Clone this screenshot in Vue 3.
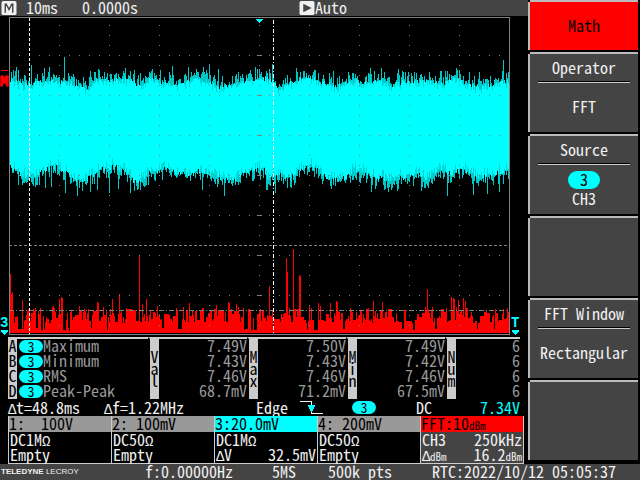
<script setup>
import { h } from 'vue'

// Splits a reading into plain characters, Greek symbols and the small dBm unit.
const Reading = (props) =>
  h('span', { class: 'reading' }, props.text.split(/([ΔΩ]|dBm)/).filter(Boolean).map((part) => {
    if (part === 'dBm') return h('span', { class: 'unit' }, part)
    if (part === 'Δ' || part === 'Ω') return h('span', { class: 'sym' }, part)
    return part
  }))
Reading.props = ['text']

// Deterministic noise so that the trace is the same on each load.
let seed = 20221012
const rand = () => {
  seed = (seed * 1664525 + 1013904223) % 4294967296
  return seed / 4294967296
}

const LEFT = 10
const RIGHT = 509
const interpolate = (points, x) => {
  let i = 0
  while (i < points.length - 2 && points[i + 1][0] < x) i++
  const [x0, y0] = points[i]
  const [x1, y1] = points[i + 1]
  return y0 + ((y1 - y0) * (x - x0)) / (x1 - x0)
}

const upper = [[10, 80], [20, 84], [30, 86], [40, 82], [50, 81], [60, 83], [70, 84], [80, 87], [88, 90], [95, 80], [105, 80], [120, 81], [130, 79], [138, 86], [150, 80], [165, 84], [180, 86], [190, 81], [200, 80], [210, 83], [220, 88], [235, 85], [245, 81], [255, 79], [270, 80], [280, 90], [290, 84], [300, 79], [315, 80], [325, 84], [335, 88], [345, 85], [355, 82], [370, 84], [380, 80], [390, 87], [400, 83], [420, 82], [440, 84], [455, 80], [475, 87], [482, 88], [490, 86], [500, 83], [509, 82]]
const lower = [[10, 167], [20, 174], [30, 177], [45, 170], [57, 165], [65, 172], [78, 181], [90, 177], [100, 169], [113, 167], [125, 172], [135, 182], [143, 179], [150, 171], [165, 169], [180, 173], [190, 175], [200, 171], [210, 174], [220, 178], [235, 178], [245, 171], [255, 170], [263, 167], [267, 178], [280, 173], [290, 178], [300, 171], [305, 165], [315, 168], [325, 176], [337, 180], [347, 177], [355, 171], [365, 173], [375, 178], [390, 179], [405, 177], [415, 173], [425, 177], [440, 170], [450, 174], [460, 169], [470, 172], [480, 178], [490, 175], [500, 172], [509, 169]]
const upperPeaks = { 16: 67, 18: 70, 31: 65, 44: 68, 49: 67, 64: 57, 73: 74, 90: 71, 98: 69, 116: 73, 130: 71, 140: 73, 160: 70, 172: 66, 188: 67, 203: 67, 209: 64, 218: 69, 255: 67, 272: 64, 296: 68, 303: 71, 315: 70, 333: 71, 353: 73, 370: 68, 384: 72, 398: 69, 405: 72, 429: 72, 440: 71, 445: 71, 447: 71, 456: 68, 459: 70, 469: 72, 479: 72, 503: 60, 506: 73 }
const lowerPeaks = { 18: 185, 33: 186, 45: 188, 51: 187, 65: 193, 77: 196, 90: 192, 97: 190, 109: 193, 118: 189, 130: 193, 134: 191, 202: 190, 224: 196, 266: 190, 275: 193, 331: 189, 371: 192, 391: 190, 398: 189, 421: 191, 447: 196, 473: 195, 487: 194, 499: 192 }

let body = ''
let fringe = ''
let shade = ''
for (let x = LEFT; x < RIGHT; x++) {
  const top = Math.round(interpolate(upper, x) + rand() * 5 - 3) - 16
  const bottom = Math.round(interpolate(lower, x) + rand() * 6 - 3) - 16
  body += `M${x} ${top}h1V${bottom}h-1z`
  const up = upperPeaks[x] ? upperPeaks[x] - 16 : Math.round(top - rand() ** 1.6 * 11)
  const down = lowerPeaks[x] ? lowerPeaks[x] - 16 : Math.round(bottom + rand() ** 1.8 * 11)
  fringe += `M${x} ${Math.min(up, top)}h1V${Math.max(down, bottom)}h-1z`
  if (rand() > 0.7) shade += `M${x} ${top}h1v4h-1zM${x} ${bottom - 6}h1v6h-1z`
}

const spectrumPeaks = { 10: 274, 11: 294, 12: 292, 13: 311, 22: 300, 29: 309, 52: 307, 53: 306, 54: 308, 59: 299, 61: 297, 62: 298, 79: 306, 97: 302, 98: 303, 103: 307, 112: 299, 119: 294, 139: 255, 142: 304, 146: 299, 157: 306, 183: 307, 189: 303, 216: 305, 228: 302, 229: 303, 236: 304, 238: 307, 260: 309, 269: 286, 286: 258, 287: 272, 293: 249, 299: 275, 300: 276, 309: 305, 311: 308, 318: 303, 320: 306, 330: 303, 336: 301, 337: 302, 350: 308, 373: 301, 382: 302, 425: 307, 427: 289, 432: 307, 451: 297, 453: 298, 454: 299, 456: 307, 458: 300, 463: 298, 465: 301, 495: 309, 507: 308 }
let spectrum = ''
let level = 12
for (let x = LEFT; x < RIGHT; x++) {
  const r = rand()
  if (r > 0.35) level = r > 0.95 ? 2 + rand() * 3 : 10 + rand() * 15
  const y = (spectrumPeaks[x] ?? 333 - Math.round(level)) - 16
  spectrum += `M${x} ${y}h1V317h-1z`
}

let dots = ''
for (let y = 25; y < 334; y += 10) {
  for (let x = 59; x < 509; x += 50) dots += `M${x} ${y - 16}h1v1h-1z`
}
for (let y = 55; y < 334; y += 40) {
  for (let x = 19; x < 509; x += 10) dots += `M${x} ${y - 16}h1v1h-1z`
  dots += `M257 ${y - 16}h5v1h-5z`
}

const measures = [
  { id: 'A', name: 'Maximum', values: ['7.49V', '7.50V', '7.49V', '6'] },
  { id: 'B', name: 'Minimum', values: ['7.43V', '7.43V', '7.42V', '6'] },
  { id: 'C', name: 'RMS', values: ['7.46V', '7.46V', '7.46V', '6'] },
  { id: 'D', name: 'Peak-Peak', values: ['68.7mV', '71.2mV', '67.5mV', '6'] }
]
const statistics = ['Val', 'Max', 'Min', 'Num']

const channels = [
  { head: '1:  100V', coupling: ['DC1MΩ'], state: ['Empty'] },
  { head: '2: 100mV', coupling: ['DC50Ω'], state: ['Empty'] },
  { head: '3:20.0mV', coupling: ['DC1MΩ'], state: ['ΔV', '32.5mV'], kind: 'active' },
  { head: '4: 200mV', coupling: ['DC50Ω'], state: ['Empty'] },
  { head: 'FFT:10dBm', coupling: ['CH3', '250kHz'], state: ['ΔdBm', '16.2dBm'], kind: 'math' }
]

const menu = [
  { label: 'Operator', value: 'FFT' },
  { label: 'Source', value: 'CH3', badge: '3' },
  {},
  { label: 'FFT Window', value: 'Rectangular' },
  {}
]
</script>

<template>
  <div class="screen">
    <main class="main">
      <header class="topbar">
        <svg class="box" viewBox="0 0 16 16" aria-hidden="true">
          <rect width="16" height="15" rx="2" fill="#f0f0f0" />
          <path d="M4 12.500V3.500h1l3 5.500 3-5.500h1v9" fill="none" stroke="#444" stroke-width="1.500" />
        </svg>
        <span class="timebase">10ms</span>
        <span class="delay">0.0000s</span>
        <span class="mode">
          <svg class="box" viewBox="0 0 16 16" aria-hidden="true">
            <rect width="16" height="15" rx="2" fill="#f0f0f0" />
            <path d="M4 3l9 4.500L4 12z" fill="#444" />
          </svg>
          Auto
        </span>
      </header>

      <svg class="plot" viewBox="0 0 528 320" shape-rendering="crispEdges" role="img" aria-label="Waveform">
        <path :d="fringe" fill="#00c8c8" />
        <path :d="body" fill="#00ffff" />
        <path :d="shade" fill="#00d8d8" />
        <path :d="spectrum" fill="#ff0000" />
        <path :d="dots" fill="#808080" />
        <path d="M9 229.500H509" stroke="#808080" stroke-dasharray="3 2" />
        <path d="M9 294.500H509" stroke="#808080" stroke-dasharray="5 2 1 2" />
        <rect x="9.500" y="1.500" width="500" height="317" fill="none" stroke="#808080" />
        <path d="M29.500 2V318" stroke="#fff" stroke-dasharray="3 2" />
        <path d="M273.500 4V318" stroke="#fff" stroke-dasharray="4 2 1 2" />
        <path d="M256 3h7v1h-1v1h-1v1h-1v1h-1v-1h-1v-1h-1v-1h-1z" fill="#00ffff" />
        <path d="M1 54h7v1h-7z" fill="#ff0000" />
        <text class="mark" x="0" y="70" fill="#ff0000" stroke="#ff0000">M</text>
        <text class="mark" x="0" y="311" fill="#00ffff">3</text>
        <text class="mark" x="511" y="311" fill="#00ffff">T</text>
        <path d="M1 314h7v2h-1v1h-1v1h-1v1h-1v-1h-1v-1h-1v-1h-1z" fill="#00ffff" />
        <path d="M512 314h7v2h-1v1h-1v1h-1v1h-1v-1h-1v-1h-1v-1h-1z" fill="#00ffff" />
      </svg>

      <table class="measures">
        <colgroup>
          <col class="c-id" /><col class="c-name" />
          <template v-for="s in statistics" :key="s">
            <col class="c-stat" /><col :class="s === 'Num' ? 'c-count' : 'c-value'" />
          </template>
        </colgroup>
        <tbody>
          <tr v-for="(m, row) in measures" :key="m.id">
            <th scope="row" class="id">{{ m.id }}</th>
            <td><span class="named"><span class="pill">3</span>{{ m.name }}</span></td>
            <template v-for="(v, i) in m.values" :key="i">
              <th v-if="row === 0" rowspan="4" class="stat">
                <span v-for="c in statistics[i]" :key="c" class="letter">{{ c }}</span>
              </th>
              <td class="value">{{ v }}</td>
            </template>
          </tr>
        </tbody>
      </table>

      <div class="trigger">
        <Reading text="Δt=48.8ms" />
        <Reading text="Δf=1.22MHz" />
        <span>Edge</span>
        <svg class="slope" viewBox="0 0 24 14" shape-rendering="crispEdges" aria-label="Falling edge">
          <path d="M0 .500h11.500V12.500H23" fill="none" stroke="#f0f0f0" />
          <path d="M8 4h7v2h-1v2h-1v2h-1v1h-1v-1h-1v-2h-1v-2h-1z" fill="#00ffff" />
        </svg>
        <span class="pill">3</span>
        <span>DC</span>
        <span class="level">7.34V</span>
      </div>

      <section class="channels">
        <article v-for="c in channels" :key="c.head" class="channel" :class="c.kind">
          <h2><Reading :text="c.head" /></h2>
          <p><Reading v-for="t in c.coupling" :key="t" :text="t" /></p>
          <p><Reading v-for="t in c.state" :key="t" :text="t" /></p>
        </article>
      </section>
    </main>

    <nav class="menu">
      <button type="button" class="key title">Math</button>
      <button v-for="(item, i) in menu" :key="i" type="button" class="key" :aria-label="item.label || 'Unassigned'">
        <template v-if="item.label">
          <span class="label">{{ item.label }}</span>
          <span class="choice">
            <span v-if="item.badge" class="badge">{{ item.badge }}</span>
            <span>{{ item.value }}</span>
          </span>
        </template>
      </button>
    </nav>

    <footer class="status">
      <span class="brand"><b>TELEDYNE</b> LECROY</span>
      <span>f:0.00000Hz</span>
      <span>5MS</span>
      <span>500k pts</span>
      <span>RTC:2022/10/12 05:05:37</span>
    </footer>
  </div>
</template>

<style>
body {
  background: #000;
}
.reading {
  white-space: pre;
}
.reading .sym {
  display: inline-block;
  width: 8px;
  font-family: "Liberation Mono", monospace;
  font-size: 14px;
  line-height: 12px;
}
.reading .unit {
  font-size: 11px;
}
</style>

<style scoped>
.screen {
  display: grid;
  grid-template-columns: minmax(0, 1fr) 112px;
  background: #000;
  color: #f0f0f0;
  font-family: "Noto Sans CJK JP", "Liberation Mono", monospace;
  font-feature-settings: "hwid";
  font-size: 16px;
  font-weight: 400;
  line-height: 14px;
}
.topbar {
  display: flex;
  height: 16px;
  padding-left: 1px;
  background: #444;
}
.box {
  width: 16px;
  height: 16px;
  padding-top: 1px;
  box-sizing: border-box;
}
.timebase {
  margin-left: 9px;
}
.delay {
  margin-left: 24px;
}
.mode {
  display: flex;
  margin-left: 161px;
}
.plot {
  display: block;
  width: 100%;
}
.mark {
  font-family: "Liberation Mono", monospace;
  font-size: 14px;
  font-weight: 700;
}
.measures {
  table-layout: fixed;
  width: calc(100% - 16px);
  margin: 1px 8px 0;
  border-spacing: 0;
  color: #999;
  line-height: 13px;
}
.c-id { width: 9px; }
.c-name { width: 131px; }
.c-stat { width: 11px; }
.c-value { width: 88px; }
.c-count { width: 64px; }
.measures th,
.measures td {
  height: 13px;
  padding: 0 0 2px;
  font-weight: 400;
}
.measures tr:first-child th,
.measures tr:first-child td {
  border-top: 2px solid #ccc;
}
.measures .id {
  background: #ccc;
  color: #000;
}
.measures .stat {
  border-left: 2px solid #000;
  background: #ccc;
  background-clip: padding-box;
  color: #000;
}
.letter {
  display: block;
  line-height: 12px;
}
.named {
  display: flex;
  height: 13px;
  padding-left: 2px;
}
.value {
  text-align: right;
}
.pill {
  width: 24px;
  height: 13px;
  border-radius: 7px;
  background: #0ff;
  color: #000;
  font-size: 14px;
  line-height: 12px;
  text-align: center;
}
.measures .pill {
  margin-top: 1px;
}
.trigger {
  display: grid;
  grid-template-columns: 96fr 152fr 44fr 52fr 64fr 40fr 64fr;
  align-items: center;
  height: 17px;
  padding: 0 8px;
}
.trigger > span:not(.pill) {
  height: 16px;
}
.slope {
  width: 24px;
  height: 14px;
}
.level {
  color: #0ff;
  text-align: right;
}
.channels {
  display: grid;
  grid-template-columns: repeat(5, 1fr);
  margin: 0 4px 0 8px;
  border-right: 1px solid #ccc;
  border-bottom: 1px solid #ccc;
}
.channel {
  border-left: 1px solid #ccc;
}
.channel h2 {
  height: 16px;
  margin: 0;
  background: #999;
  color: #000;
  font-size: 16px;
  font-weight: 400;
}
.channel p {
  display: flex;
  justify-content: space-between;
  height: 15px;
  margin: 0;
  padding: 0 1px;
}
.channel p:last-child {
  padding-bottom: 1px;
}
.active h2 {
  background: #0ff;
}
.math {
  background: #444;
}
.math h2 {
  background: #f00;
}
.menu {
  display: flex;
  flex-direction: column;
  gap: 2px;
  padding: 0 2px 4px 0;
}
.key {
  position: relative;
  display: flex;
  flex-direction: column;
  align-items: center;
  height: 80px;
  padding: 0 8px;
  border: 0 solid #bbb;
  border-width: 2px 0 0 2px;
  background: #444;
  color: inherit;
  font: inherit;
  font-feature-settings: inherit;
}
.key::before {
  content: "";
  position: absolute;
  top: -2px;
  left: -2px;
  width: 2px;
  height: 2px;
  background: #000;
}
.title {
  justify-content: center;
  height: 50px;
  padding-bottom: 2px;
  background: #f00;
  color: #000;
}
.label {
  align-self: stretch;
  padding: 6px 0 7px;
  border-bottom: 1px solid #000;
  box-shadow: 0 1px #ccc;
}
.choice {
  display: flex;
  flex: 1;
  flex-direction: column;
  align-items: center;
  justify-content: center;
  gap: 2px;
  padding-bottom: 2px;
}
.badge {
  width: 32px;
  height: 18px;
  border-radius: 9px;
  background: #0ff;
  color: #000;
  line-height: 16px;
}
.status {
  display: flex;
  grid-column: 1 / -1;
  height: 16px;
  background: #444;
  white-space: pre;
}
.brand {
  width: 145px;
  padding-left: 1px;
  box-sizing: border-box;
  font-family: "Liberation Sans", sans-serif;
  font-size: 8px;
  line-height: 16px;
}
.status span:nth-child(2) { width: 127px; }
.status span:nth-child(3) { width: 56px; }
.status span:nth-child(4) { width: 104px; }
</style>
